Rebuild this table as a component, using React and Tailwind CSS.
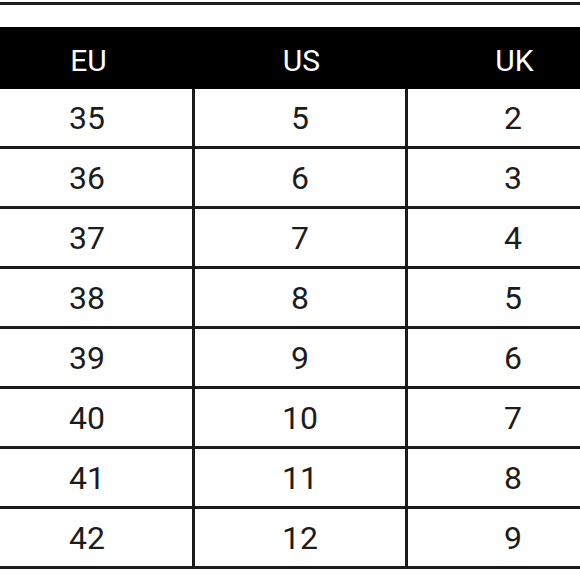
import React from 'react';

const rows = [
  ['35', '5', '2'],
  ['36', '6', '3'],
  ['37', '7', '4'],
  ['38', '8', '5'],
  ['39', '9', '6'],
  ['40', '10', '7'],
  ['41', '11', '8'],
  ['42', '12', '9'],
];

const SizeChart = () => {
  return (
    <div className="w-[580px] h-[580px] overflow-hidden bg-white" style={{ fontFamily: 'Roboto, "Liberation Sans", sans-serif' }}>
      {/* top rule */}
      <div className="mt-[2px] h-[3px] bg-[#1e1e1e]" />

      <div className="mt-[22px] ml-[-18px] w-[640px]">
        {/* header */}
        <div className="flex h-[62px] bg-black text-white text-[30px] leading-none">
          {['EU', 'US', 'UK'].map((h) => (
            <div key={h} className="w-[213px] flex items-center justify-center pt-[5px]">
              {h}
            </div>
          ))}
        </div>

        {/* body */}
        {rows.map((r, i) => (
          <div key={i} className="flex h-[60px] border-b-[3px] border-[#1a1a1a] text-[32px] leading-none text-[#1c1c1c]">
            <div className="w-[213px] border-r-[3px] border-[#1a1a1a] flex items-center justify-center">{r[0]}</div>
            <div className="w-[213px] border-r-[3px] border-[#1a1a1a] flex items-center justify-center">{r[1]}</div>
            <div className="w-[210px] flex items-center justify-center">{r[2]}</div>
          </div>
        ))}
      </div>
    </div>
  );
};

export default function App() {
  return <SizeChart />;
}
